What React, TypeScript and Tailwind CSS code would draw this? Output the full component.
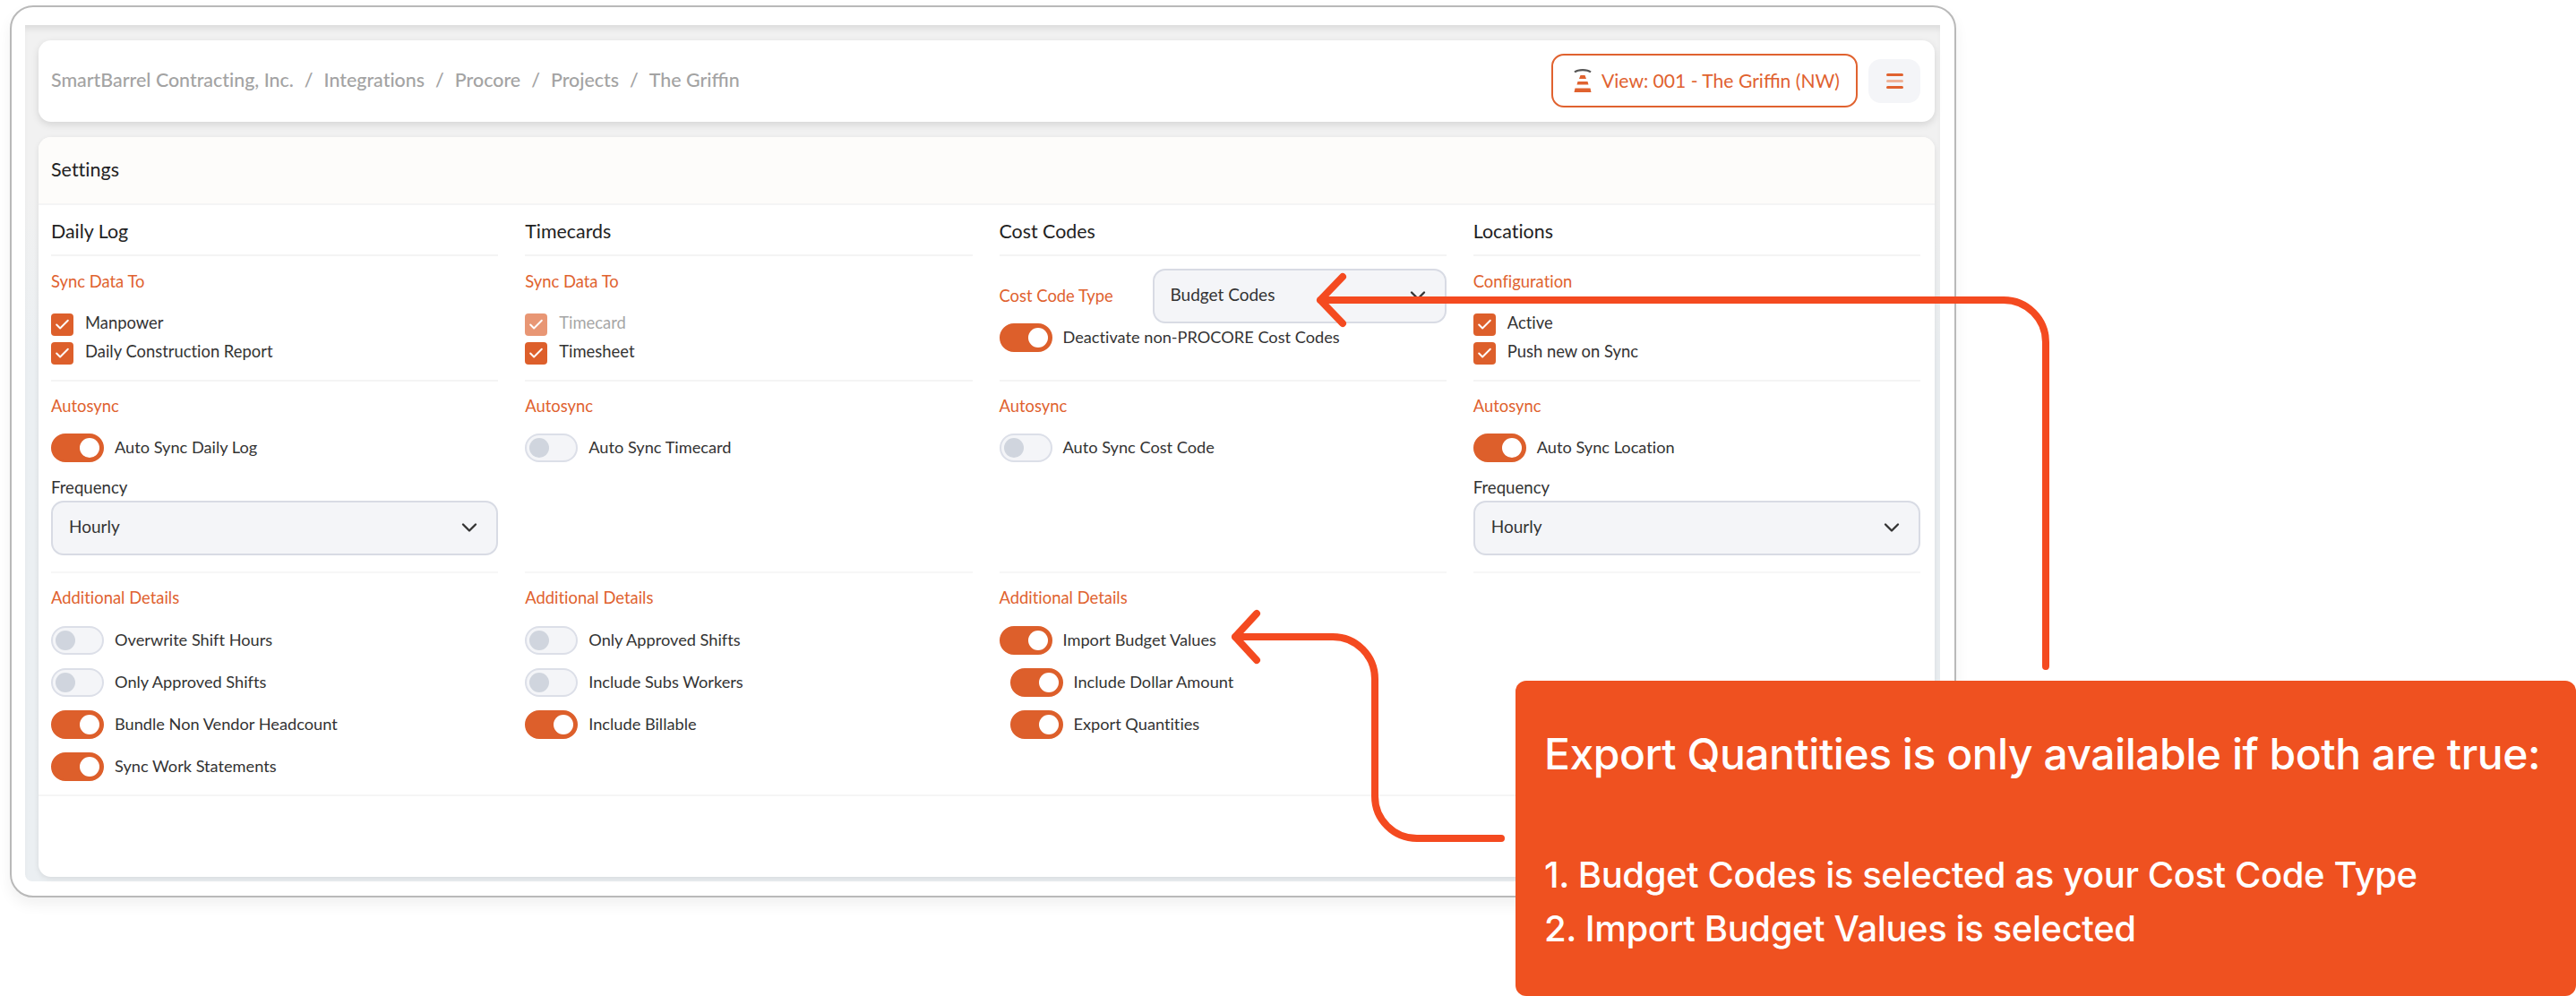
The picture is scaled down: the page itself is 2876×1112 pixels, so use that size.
import { Check, ChevronDown } from "lucide-react";
import clsx from "clsx";

type Option = {
  label: string;
  on: boolean;
  nested?: boolean;
  disabled?: boolean;
};

type Column = {
  title: string;
  syncTitle: string;
  checks: Option[];
  autosync: Option;
  frequency?: string;
  details?: Option[];
};

const crumbs = ["SmartBarrel Contracting, Inc.", "Integrations", "Procore", "Projects", "The Griffin"];

const columns: Column[] = [
  {
    title: "Daily Log",
    syncTitle: "Sync Data To",
    checks: [
      { label: "Manpower", on: true },
      { label: "Daily Construction Report", on: true },
    ],
    autosync: { label: "Auto Sync Daily Log", on: true },
    frequency: "Hourly",
    details: [
      { label: "Overwrite Shift Hours", on: false },
      { label: "Only Approved Shifts", on: false },
      { label: "Bundle Non Vendor Headcount", on: true },
      { label: "Sync Work Statements", on: true },
    ],
  },
  {
    title: "Timecards",
    syncTitle: "Sync Data To",
    checks: [
      { label: "Timecard", on: true, disabled: true },
      { label: "Timesheet", on: true },
    ],
    autosync: { label: "Auto Sync Timecard", on: false },
    details: [
      { label: "Only Approved Shifts", on: false },
      { label: "Include Subs Workers", on: false },
      { label: "Include Billable", on: true },
    ],
  },
  {
    title: "Cost Codes",
    syncTitle: "Cost Code Type",
    checks: [],
    autosync: { label: "Auto Sync Cost Code", on: false },
    details: [
      { label: "Import Budget Values", on: true },
      { label: "Include Dollar Amount", on: true, nested: true },
      { label: "Export Quantities", on: true, nested: true },
    ],
  },
  {
    title: "Locations",
    syncTitle: "Configuration",
    checks: [
      { label: "Active", on: true },
      { label: "Push new on Sync", on: true },
    ],
    autosync: { label: "Auto Sync Location", on: true },
    frequency: "Hourly",
  },
];

function Toggle({ label, on, nested }: Option) {
  return (
    <div className={clsx("flex h-8 items-center gap-3", nested && "ml-3")}>
      <div
        className={clsx(
          "flex h-8 w-[59px] items-center rounded-full border-2 px-[3px]",
          on ? "justify-end border-[#dd5f2b] bg-[#dd5f2b]" : "border-[#dcdfe8] bg-[#f4f5f8]"
        )}
      >
        <div className={clsx("size-[22px] rounded-full", on ? "bg-white" : "bg-[#d0d5de]")} />
      </div>
      <span className="pb-px">{label}</span>
    </div>
  );
}

function Checkbox({ label, disabled }: Option) {
  return (
    <div className={clsx("flex h-8 gap-[13px]", disabled && "opacity-65")}>
      <div className="flex size-[25px] items-center justify-center rounded bg-[#dd5f2b]">
        <Check className="size-[19px] text-white" strokeWidth={2.4} />
      </div>
      <span className={clsx("-mt-1 text-[18.4px] leading-7", disabled && "text-[#777]")}>{label}</span>
    </div>
  );
}

function Select({ value }: { value: string }) {
  return (
    <div className="flex h-[61px] w-full items-center justify-between rounded-[14px] border-2 border-[#d8dbe4] bg-[#f4f5f8] pr-4 pb-px pl-[18px] text-[19px]">
      <span className="pb-px">{value}</span>
      <ChevronDown className="size-7 text-[#333]" strokeWidth={2} />
    </div>
  );
}

function SectionTitle({ children }: { children: string }) {
  return <h4 className="text-[18.4px] leading-7 text-[#e0622f]">{children}</h4>;
}

function SettingsColumn({ column }: { column: Column }) {
  const { title, syncTitle, checks, autosync, frequency, details } = column;

  return (
    <div className="flex flex-col">
      <h3 className="h-[57px] border-b-2 border-[#f4f4f4] pt-[15px] text-[21.4px] leading-7 text-[#222]">{title}</h3>

      <section className="h-[140px] border-b-2 border-[#f4f4f4] pt-[14px]">
        {checks.length > 0 ? (
          <>
            <SectionTitle>{syncTitle}</SectionTitle>
            <div className="mt-[22px]">
              {checks.map((c) => (
                <Checkbox key={c.label} {...c} />
              ))}
            </div>
          </>
        ) : (
          <>
            <div className="flex h-[61px] items-center">
              <div className="w-[171px] pb-px">
                <SectionTitle>{syncTitle}</SectionTitle>
              </div>
              <div className="flex-1">
                <Select value="Budget Codes" />
              </div>
            </div>
            <Toggle label="Deactivate non-PROCORE Cost Codes" on />
          </>
        )}
      </section>

      <section className="h-[214px] border-b-2 border-[#f7f7f7] pt-[13px]">
        <SectionTitle>Autosync</SectionTitle>
        <div className="mt-[17px]">
          <Toggle {...autosync} />
        </div>
        {frequency && (
          <div className="mt-[14px]">
            <div className="mb-px text-[18.6px] leading-7">Frequency</div>
            <Select value={frequency} />
          </div>
        )}
      </section>

      {details && (
        <section className="pt-[13px]">
          <SectionTitle>Additional Details</SectionTitle>
          <div className="mt-[18px] flex flex-col gap-[15px]">
            {details.map((d) => (
              <Toggle key={d.label} {...d} />
            ))}
          </div>
        </section>
      )}
    </div>
  );
}

function BarrelIcon() {
  return (
    <svg className="h-[28px] w-[20px]" viewBox="0 0 20 28" fill="none">
      <path d="M1 4.5C5 1.2 15 1.2 19 4.5" stroke="#555" strokeWidth="2.2" />
      <path d="M7.5 8h5l1.5 4H6zM4.5 15h11l1 3.5h-13zM1.5 22.5h17l1 4.5H.5z" fill="#e0622f" />
    </svg>
  );
}

function Header() {
  return (
    <header className="flex h-[91px] items-center justify-between rounded-[14px] bg-white pr-4 pb-px pl-[14px] shadow-[0_3px_8px_rgba(0,0,0,0.12)]">
      <nav className="flex gap-3 pb-px text-[21.4px] font-medium text-[#a3a3a3]">
        {crumbs.map((c, i) => (
          <span key={c} className="flex gap-3">
            {i > 0 && <span>/</span>}
            <span className={clsx(c.includes("ffi") && "[font-variant-ligatures:normal]")}>{c}</span>
          </span>
        ))}
      </nav>
      <div className="flex items-center gap-3">
        <button className="flex h-[60px] w-[342px] items-center gap-[11px] rounded-[14px] border-2 border-[#e0622f] pl-[23px] text-[21.1px] text-[#e0622f] [font-variant-ligatures:normal]">
          <BarrelIcon />
          <span className="pb-px whitespace-nowrap">View: 001 - The Griffin (NW)</span>
        </button>
        <button className="flex h-[49px] w-[58px] flex-col items-center justify-center gap-1 rounded-[14px] bg-[#f4f5f8]">
          <span className="h-[3px] w-[19px] rounded-full bg-[#e0622f]" />
          <span className="h-[3px] w-[19px] rounded-full bg-[#efb297]" />
          <span className="h-[3px] w-[19px] rounded-full bg-[#e0622f]" />
        </button>
      </div>
    </header>
  );
}

function Arrows() {
  return (
    <svg
      className="absolute top-0 left-0 h-[1112px] w-[2876px]"
      viewBox="0 0 2876 1112"
      fill="none"
      stroke="#f44a20"
      strokeWidth="8"
      strokeLinecap="round"
      strokeLinejoin="round"
    >
      <path d="M2284 744V382A47 47 0 0 0 2237 335H1474M1499 309L1474 335L1499 361" />
      <path d="M1676 936H1582A47 47 0 0 1 1535 889V758A47 47 0 0 0 1488 711H1379M1403 685L1379 711L1403 737" />
    </svg>
  );
}

export default function App() {
  return (
    <div className="relative h-[1112px] w-[2876px] overflow-hidden bg-white pt-[6px] pl-[11px] font-['Lato',sans-serif] text-[18.2px] text-[#333] [font-variant-ligatures:no-common-ligatures]">
      <div className="h-[996px] w-[2173px] rounded-[26px] border-2 border-[#b9b9b9] bg-white pt-5 pl-[15px] shadow-[0_8px_16px_rgba(0,0,0,0.06)]">
        <div className="h-[956px] w-[2138px] rounded-b-lg bg-linear-to-b from-[#f1f1f1] from-20% to-[#ebeff2] to-40% px-[15px] pr-[6px] pt-[17px] shadow-[inset_0_7px_7px_-3px_rgba(0,0,0,0.09)]">
          <Header />
          <main className="mt-[17px] h-[826px] overflow-hidden rounded-[14px] bg-white shadow-[0_2px_6px_rgba(0,0,0,0.09)]">
            <h2 className="flex h-[76px] items-center border-b-2 border-[#f5f5f5] bg-[#fdfcfa] pb-px pl-[14px] text-[21.5px] text-[#222]">
              Settings
            </h2>
            <div className="grid h-[660px] grid-cols-4 gap-x-[30px] border-b-2 border-[#f5f5f5] pr-4 pl-[14px]">
              {columns.map((c) => (
                <SettingsColumn key={c.title} column={c} />
              ))}
            </div>
          </main>
        </div>
      </div>

      <Arrows />

      <aside className="absolute top-[760px] left-[1692px] h-[352px] w-[1184px] rounded-xl bg-[#ef5120] pt-[53px] pl-[32px] font-['Inter',sans-serif] font-medium tracking-[-0.01em] text-white">
        <p className="text-5xl leading-[58px] tracking-[-0.01em] whitespace-nowrap">
          Export Quantities is only available if both are true:
        </p>
        <ol className="mt-[76px] text-[40px] leading-[60px] tracking-[-0.01em] whitespace-nowrap">
          <li>1. Budget Codes is selected as your Cost Code Type</li>
          <li>2. Import Budget Values is selected</li>
        </ol>
      </aside>
    </div>
  );
}
